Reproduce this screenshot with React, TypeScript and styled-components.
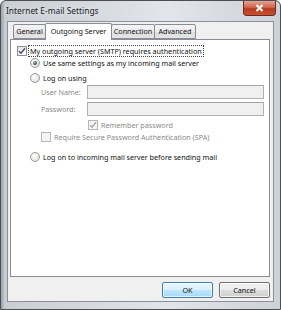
import React from "react";
import styled, { createGlobalStyle } from "styled-components";

const Global = createGlobalStyle`
  html, body { margin: 0; padding: 0; background: #ffffff; }
  body { font-family: "Noto Sans", "Open Sans", "DejaVu Sans", sans-serif; }
  * { box-sizing: border-box; }
`;

const Window = styled.div`
  width: 281px;
  height: 310px;
  border: 1px solid #4b4f55;
  border-radius: 6px 6px 0 0;
  background: linear-gradient(90deg, #9aa1a8 0px, #c9ced4 4px, #d9dde2 40%, #e2e5e9 60%, #cdd2d7 100%);
  display: flex;
  flex-direction: column;
  overflow: hidden;
`;

const TitleBar = styled.div`
  height: 20px;
  display: flex;
  justify-content: space-between;
  align-items: flex-start;
  padding-left: 5px;
  padding-right: 4px;
`;

const Title = styled.div`
  font-size: 8.4px;
  color: #1c1c1c;
  line-height: 19px;
  text-shadow: 0 0 6px rgba(255, 255, 255, 0.9);
`;

const CloseButton = styled.div`
  width: 33px;
  height: 15px;
  border: 1px solid #6b2a22;
  border-top: none;
  border-radius: 0 0 4px 4px;
  background: linear-gradient(180deg, #e6a294 0%, #d0654e 45%, #b73a1f 55%, #c8502f 100%);
  display: flex;
  align-items: center;
  justify-content: center;
`;

const Client = styled.div`
  flex: 1;
  margin: 0 6px 7px 6px;
  background: #f0f0f0;
  border: 1px solid #8b9097;
  display: flex;
  flex-direction: column;
  padding: 0 3px 0 2px;
`;

const TabStrip = styled.div`
  display: flex;
  align-items: flex-end;
  height: 17px;
  padding-left: 4px;
  position: relative;
  z-index: 1;
`;

const Tab = styled.div<{ $active?: boolean; $w: number }>`
  width: ${(p) => p.$w}px;
  height: ${(p) => (p.$active ? 17 : 15)}px;
  margin-left: -1px;
  margin-bottom: ${(p) => (p.$active ? -1 : 0)}px;
  border: 1px solid #898c95;
  border-bottom: ${(p) => (p.$active ? "none" : "1px solid #898c95")};
  border-radius: 2px 2px 0 0;
  background: ${(p) =>
    p.$active ? "#ffffff" : "linear-gradient(180deg, #f4f4f4 0%, #ebebeb 50%, #dedede 51%, #e4e4e4 100%)"};
  font-size: 7.2px;
  color: #111;
  display: flex;
  justify-content: center;
  align-items: ${(p) => (p.$active ? "flex-start" : "center")};
  padding-top: ${(p) => (p.$active ? 2 : 0)}px;
  line-height: 11px;
  white-space: nowrap;
`;

const Panel = styled.div`
  height: 238px;
  background: #ffffff;
  border: 1px solid #898c95;
  display: flex;
  flex-direction: column;
  padding: 5px 5px 0 6px;
`;

const Row = styled.div<{ $indent?: number; $top?: number }>`
  display: flex;
  align-items: center;
  height: 12px;
  margin-left: ${(p) => p.$indent ?? 0}px;
  margin-top: ${(p) => p.$top ?? 0}px;
`;

const FieldRow = styled.div<{ $top?: number }>`
  display: flex;
  align-items: center;
  height: 14px;
  margin-left: 24px;
  margin-top: ${(p) => p.$top ?? 0}px;
`;

const Label = styled.span<{ $disabled?: boolean; $focus?: boolean }>`
  font-size: 7.2px;
  line-height: 10px;
  color: ${(p) => (p.$disabled ? "#8a8a8a" : "#111")};
  white-space: nowrap;
  padding: 0 1px;
  outline: ${(p) => (p.$focus ? "1px dotted #444" : "none")};
`;

const FieldLabel = styled.span`
  width: 46px;
  font-size: 7.2px;
  color: #8a8a8a;
  white-space: nowrap;
`;

const Input = styled.div`
  flex: 1;
  height: 14px;
  border: 1px solid #aeb2b8;
  border-top-color: #a3a7ad;
  background: #f0f0f0;
`;

const Box = styled.span<{ $disabled?: boolean }>`
  width: 10px;
  height: 10px;
  border: 1px solid ${(p) => (p.$disabled ? "#b8b8b8" : "#8f8f8f")};
  background: ${(p) =>
    p.$disabled ? "#f4f4f4" : "linear-gradient(135deg, #dcdcdc 0%, #f6f6f6 60%, #ffffff 100%)"};
  margin-right: 2px;
  display: inline-flex;
  align-items: center;
  justify-content: center;
  flex-shrink: 0;
`;

const Radio = styled.span<{ $checked?: boolean }>`
  width: 10px;
  height: 10px;
  border-radius: 50%;
  border: 1px solid #9a9a9a;
  background: radial-gradient(circle at 40% 40%, #ffffff 0%, #e3e3e3 70%, #d0d0d0 100%);
  margin-right: 2px;
  display: inline-flex;
  align-items: center;
  justify-content: center;
  flex-shrink: 0;
  &::after {
    content: "";
    display: ${(p) => (p.$checked ? "block" : "none")};
    width: 4px;
    height: 4px;
    border-radius: 50%;
    background: radial-gradient(circle at 35% 35%, #a8c4a8 0%, #3d4f5f 60%, #2a3a48 100%);
  }
`;

const Check = ({ color }: { color: string }) => (
  <svg width="8" height="8" viewBox="0 0 8 8">
    <path d="M1 4.2 L3 6.3 L7 1.3" fill="none" stroke={color} strokeWidth="1.4" />
  </svg>
);

const ButtonRow = styled.div`
  display: flex;
  justify-content: flex-end;
  gap: 6px;
  margin-top: 5px;
`;

const Button = styled.div<{ $primary?: boolean }>`
  width: 51px;
  height: 16px;
  border: 1px solid ${(p) => (p.$primary ? "#3c7fb1" : "#707070")};
  border-radius: 2px;
  background: ${(p) =>
    p.$primary
      ? "linear-gradient(180deg, #eaf6fd 0%, #d9f0fc 50%, #bee6fd 51%, #a7d9f5 100%)"
      : "linear-gradient(180deg, #f2f2f2 0%, #ebebeb 50%, #dddddd 51%, #cfcfcf 100%)"};
  box-shadow: inset 0 0 0 1px rgba(255, 255, 255, 0.7);
  font-size: 7.2px;
  color: #111;
  display: flex;
  align-items: center;
  justify-content: center;
`;

export default function App() {
  return (
    <>
      <Global />
      <Window>
        <TitleBar>
          <Title>Internet E-mail Settings</Title>
          <CloseButton>
            <svg width="9" height="8" viewBox="0 0 9 8">
              <path d="M1.5 1 L7.5 7 M7.5 1 L1.5 7" stroke="#ffffff" strokeWidth="2" />
            </svg>
          </CloseButton>
        </TitleBar>
        <Client>
          <TabStrip>
            <Tab $w={33}>General</Tab>
            <Tab $w={67} $active>Outgoing Server</Tab>
            <Tab $w={44}>Connection</Tab>
            <Tab $w={42}>Advanced</Tab>
          </TabStrip>
          <Panel>
            <Row>
              <Box>
                <Check color="#3b4d67" />
              </Box>
              <Label $focus>My outgoing server (SMTP) requires authentication</Label>
            </Row>
            <Row $indent={13}>
              <Radio $checked />
              <Label>Use same settings as my incoming mail server</Label>
            </Row>
            <Row $indent={13} $top={3}>
              <Radio />
              <Label>Log on using</Label>
            </Row>
            <FieldRow $top={1}>
              <FieldLabel>User Name:</FieldLabel>
              <Input />
            </FieldRow>
            <FieldRow $top={3}>
              <FieldLabel>Password:</FieldLabel>
              <Input />
            </FieldRow>
            <Row $indent={71} $top={3}>
              <Box $disabled>
                <Check color="#a9a9a9" />
              </Box>
              <Label $disabled>Remember password</Label>
            </Row>
            <Row $indent={24}>
              <Box $disabled />
              <Label $disabled>Require Secure Password Authentication (SPA)</Label>
            </Row>
            <Row $indent={13} $top={8}>
              <Radio />
              <Label>Log on to incoming mail server before sending mail</Label>
            </Row>
          </Panel>
          <ButtonRow>
            <Button $primary>OK</Button>
            <Button>Cancel</Button>
          </ButtonRow>
        </Client>
      </Window>
    </>
  );
}
